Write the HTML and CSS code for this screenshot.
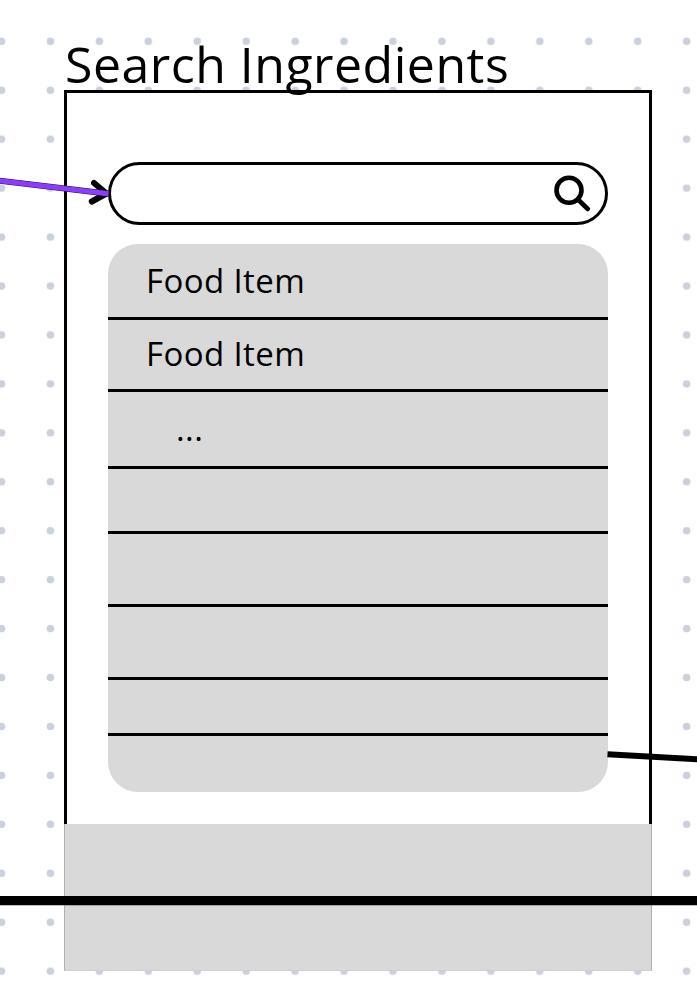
FILE: index.html
```html
<!DOCTYPE html>
<html lang="en">
<head>
<meta charset="utf-8">
<title>Search Ingredients</title>
<link rel="stylesheet" href="styles.css">
</head>
<body>
<main class="board">
  <svg class="dots" width="697" height="1002" aria-hidden="true">
    <defs>
      <pattern id="grid" x="-22.97" y="-32.1" width="48.94" height="48.94" patternUnits="userSpaceOnUse">
        <circle cx="24.47" cy="24.47" r="3.8" fill="#cad1dd"/>
      </pattern>
    </defs>
    <rect width="697" height="976" fill="url(#grid)"/>
    <rect width="697" height="30" fill="#fff"/>
  </svg>
  <h1 class="title">Search Ingredients</h1>
  <section class="screen">
    <div class="content">
      <div class="search">
        <svg class="search-icon" width="40" height="40" viewBox="0 0 40 40" fill="none" stroke="#000" stroke-linecap="round" aria-hidden="true">
          <circle cx="16" cy="16.300" r="12.500" stroke-width="4.600"/>
          <path d="M25 25.500L34.800 35" stroke-width="4.600"/>
        </svg>
      </div>
      <ul class="list">
        <li class="row row-first">Food Item</li>
        <li class="row row-second">Food Item</li>
        <li class="row row-more">...</li>
        <li class="row row-short"></li>
        <li class="row"></li>
        <li class="row"></li>
        <li class="row row-shorter"></li>
        <li class="row row-last"></li>
      </ul>
    </div>
    <div class="footer"></div>
  </section>
  <svg class="connectors" width="697" height="1002" fill="none" aria-hidden="true">
    <path d="M94 183L106.500 193.500L91.800 201.500" stroke="#000" stroke-width="6" stroke-linecap="round" stroke-linejoin="round"/>
    <path d="M-2 180.600L108.500 193.700" stroke="#24104a" stroke-width="6"/>
    <path d="M-2 180.600L108.500 193.700" stroke="#8b3dff" stroke-width="5"/>
    <path d="M607.500 754.200L698 759.300" stroke="#000" stroke-width="6"/>
    <path d="M0 900.600H697" stroke="#000" stroke-width="9.200"/>
  </svg>
</main>
</body>
</html>
```
FILE: styles.css
```css
body {
  margin: 0;
  background: #fff;
  color: #000;
  font-family: "Open Sans", "Noto Sans", sans-serif;
}

.board {
  position: relative;
  box-sizing: border-box;
  width: 697px;
  height: 1002px;
  padding: 30px 45px 31px 64px;
  overflow: hidden;
}

.dots,
.connectors {
  position: absolute;
  top: 0;
  left: 0;
}

.title {
  position: relative;
  z-index: 1;
  height: 60px;
  margin: 0;
  padding-left: 1px;
  font-size: 50px;
  font-weight: 400;
  line-height: 68px;
  letter-spacing: 0.5px;
  white-space: nowrap;
}

.screen {
  position: relative;
  width: 588px;
}

.content {
  box-sizing: border-box;
  height: 734px;
  padding: 69px 41px 0;
  border: 3px solid #000;
  border-bottom: 0;
  background: #fff;
}

.search {
  display: flex;
  justify-content: flex-end;
  box-sizing: border-box;
  width: 500px;
  height: 63px;
  padding: 9px 12px 0 0;
  border: 3px solid #000;
  border-radius: 32px;
}

.list {
  width: 500px;
  margin: 19px 0 0;
  padding: 0;
  overflow: hidden;
  list-style: none;
  border-radius: 30px;
  background: #d9d9d9;
}

.row {
  box-sizing: border-box;
  height: 73px;
  padding-left: 38px;
  border-bottom: 3px solid #000;
  font-size: 33px;
  line-height: 70px;
  letter-spacing: 0.4px;
}

.row-first {
  height: 76px;
  line-height: 73px;
}

.row-second {
  height: 72px;
  line-height: 68px;
}

.row-more {
  height: 77px;
  padding-left: 68px;
  line-height: 74px;
}

.row-short {
  height: 65px;
}

.row-shorter {
  height: 56px;
}

.row-last {
  height: 56px;
  border-bottom: 0;
}

.footer {
  box-sizing: border-box;
  height: 147px;
  border: 1px solid #b0b0b0;
  border-top: 0;
  border-bottom-color: #cfcfcf;
  background: #d9d9d9;
}
```
